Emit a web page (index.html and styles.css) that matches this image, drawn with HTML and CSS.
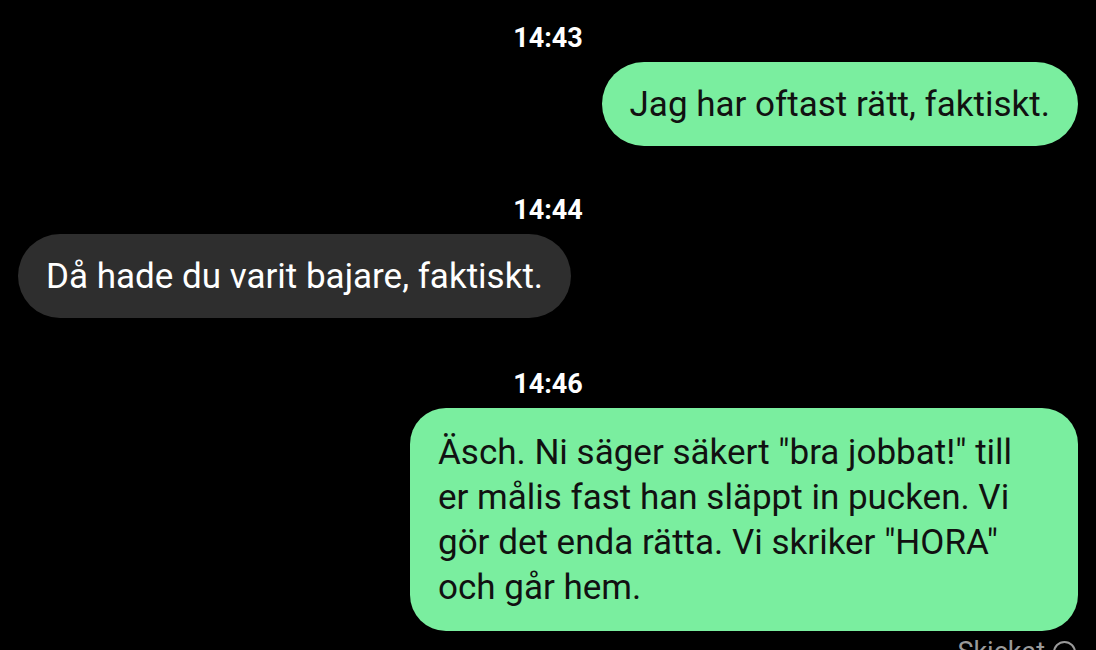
FILE: index.html
```html
<!DOCTYPE html>
<html lang="sv">
<head>
    <meta charset="UTF-8">
    <meta name="viewport" content="width=device-width, initial-scale=1.0">
    <title>Meddelanden</title>
    <link rel="stylesheet" href="styles.css">
</head>
<body>
    <div class="chat">
        <div class="time">14:43</div>
        <div class="msg out">Jag har oftast rätt, faktiskt.</div>

        <div class="time">14:44</div>
        <div class="msg in">Då hade du varit bajare, faktiskt.</div>

        <div class="time">14:46</div>
        <div class="msg out long">Äsch. Ni säger säkert "bra jobbat!" till er målis fast han släppt in pucken. Vi gör det enda rätta. Vi skriker "HORA" och går hem.</div>
        <div class="status">Skickat <span class="status-icon"></span></div>
    </div>
</body>
</html>
```

FILE: styles.css
```css
body {
    margin: 0;
    padding: 0;
    background-color: #000;
    font-family: Roboto, "Noto Sans", sans-serif;
    overflow: hidden;
}
.chat {
    display: flex;
    flex-direction: column;
    padding: 22px 18px 0 18px;
}
.time {
    align-self: center;
    color: #fff;
    font-weight: bold;
    font-size: 27px;
    line-height: 32px;
    margin-bottom: 8px;
}
.msg {
    font-size: 35px;
    line-height: 45px;
    padding: 20px 28px 19px 28px;
    border-radius: 42px;
    margin-bottom: 48px;
}
.msg.out {
    align-self: flex-end;
    background-color: #7aee9f;
    color: #111;
}
.msg.in {
    align-self: flex-start;
    background-color: #2e2e2e;
    color: #fff;
    margin-bottom: 50px;
}
.msg.long {
    max-width: 612px;
    padding: 22px 28px 21px 28px;
    border-radius: 36px;
    margin-bottom: 5px;
}
.status {
    align-self: flex-end;
    display: flex;
    align-items: center;
    gap: 8px;
    color: #9a9a9a;
    font-size: 27px;
    line-height: 32px;
    margin-right: 2px;
}
.status-icon {
    display: inline-block;
    width: 19px;
    height: 19px;
    border: 2px solid #9a9a9a;
    border-radius: 50%;
}
```
